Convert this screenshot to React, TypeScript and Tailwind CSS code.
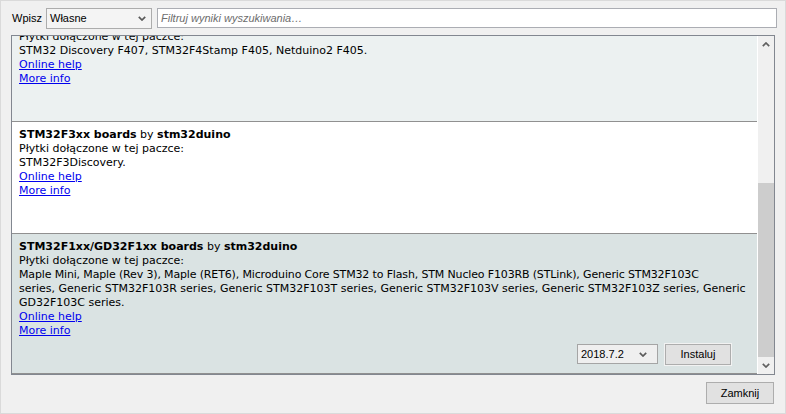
import React from "react";

function Chevron({ up = false, color = "#5a5a5a" }: { up?: boolean; color?: string }) {
  return (
    <svg width="8" height="5" viewBox="0 0 8 5" className="block shrink-0">
      <path
        d={up ? "M0.8 4.2L4 1L7.2 4.2" : "M0.8 0.8L4 4L7.2 0.8"}
        fill="none"
        stroke={color}
        strokeWidth="1.7"
      />
    </svg>
  );
}

type Line = { text: string; tight?: boolean };

type ItemProps = {
  bg: string;
  title?: string;
  lines: Line[];
  selected?: boolean;
  first?: boolean;
};

function Item({ bg, title, lines, selected, first }: ItemProps) {
  return (
    <div
      className={`${bg} ${first ? "mt-[-12px]" : ""} border-b border-[#909090] pl-[7px] pr-[26px] pt-[6px] pb-[8px] font-['DejaVu_Sans',Verdana,sans-serif] text-[11px] leading-[14px] text-black`}
    >
      {title && (
        <div className="whitespace-nowrap">
          <span className="font-bold">{title}</span> by <span className="font-bold">stm32duino</span>
        </div>
      )}
      <div className="whitespace-nowrap">Płytki dołączone w tej paczce:</div>
      {lines.map((l, i) => (
        <div key={i} className={`whitespace-nowrap ${l.tight ? "tracking-[-0.15px]" : ""}`}>
          {l.text}
        </div>
      ))}
      <div className="whitespace-nowrap">
        <span className="text-[#0000ee] underline">Online help</span>
      </div>
      <div className="whitespace-nowrap">
        <span className="text-[#0000ee] underline">More info</span>
      </div>
      <div
        className={`mt-[6px] h-[21px] flex justify-end items-start font-['Liberation_Sans',Arial,sans-serif] leading-none ${
          selected ? "" : "invisible"
        }`}
      >
        <div className="w-[81px] h-[20px] border border-[#a5a5a5] bg-[#efefef] flex items-center justify-between pl-[3px] pr-[10px]">
          <span>2018.7.2</span>
          <Chevron />
        </div>
        <div className="ml-[7px] w-[66px] h-[21px] border border-[#adadad] bg-[#e1e1e1] shadow-[0_0_0_1px_#f2f2f2] flex items-center justify-center">
          Instaluj
        </div>
      </div>
    </div>
  );
}

export default function App() {
  return (
    <div className="w-[786px] h-[414px] bg-[#f0f0f0] border border-[#dadada] flex flex-col overflow-hidden font-['Liberation_Sans',Arial,sans-serif] text-[11px] text-black">
      <div className="flex items-start h-[21px] mt-[7px] pl-[11px] pr-[8px] leading-none">
        <div className="w-[34px] h-[21px] flex items-center">Wpisz</div>
        <div className="w-[106px] h-[21px] border border-[#acacac] bg-[#f4f4f4] flex items-center justify-between pl-[3px] pr-[5px]">
          <span>Własne</span>
          <Chevron />
        </div>
        <div className="ml-[5px] flex-1 h-[20px] border border-[#abadb3] bg-white flex items-center pl-[3px] italic text-[#6d6d6d]">
          Filtruj wyniki wyszukiwania…
        </div>
      </div>

      <div className="mt-[6px] ml-[10px] w-[764px] h-[340px] border border-[#828790] flex">
        <div className="flex-1 overflow-hidden bg-white flex flex-col">
          <Item
            first
            bg="bg-[#ecf1f1]"
            lines={[{ text: "STM32 Discovery F407, STM32F4Stamp F405, Netduino2 F405." }]}
          />
          <Item bg="bg-white" title="STM32F3xx boards" lines={[{ text: "STM32F3Discovery." }]} />
          <Item
            selected
            bg="bg-[#dae3e3]"
            title="STM32F1xx/GD32F1xx boards"
            lines={[
              {
                text: "Maple Mini, Maple (Rev 3), Maple (RET6), Microduino Core STM32 to Flash, STM Nucleo F103RB (STLink), Generic STM32F103C",
                tight: true,
              },
              {
                text: "series, Generic STM32F103R series, Generic STM32F103T series, Generic STM32F103V series, Generic STM32F103Z series, Generic",
              },
              { text: "GD32F103C series." },
            ]}
          />
        </div>
        <div className="w-[17px] border-l border-white bg-[#f0f0f0] flex flex-col">
          <div className="h-[17px] flex items-center justify-center">
            <Chevron up color="#606060" />
          </div>
          <div className="flex-1">
            <div className="mt-[130px] h-[174px] bg-[#cdcdcd]" />
          </div>
          <div className="h-[17px] flex items-center justify-center">
            <Chevron color="#606060" />
          </div>
        </div>
      </div>

      <div className="mt-[7px] flex justify-end pr-[11px]">
        <div className="w-[68px] h-[22px] border border-[#adadad] bg-[#e1e1e1] flex items-center justify-center">
          Zamknij
        </div>
      </div>
    </div>
  );
}
